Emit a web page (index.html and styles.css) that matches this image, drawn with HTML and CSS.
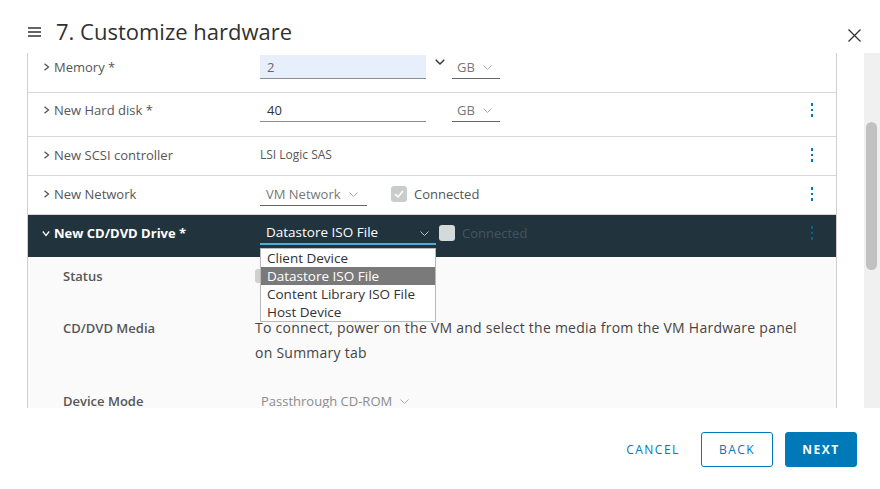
FILE: index.html
```html
<!DOCTYPE html>
<html>
<head>
<meta charset="utf-8">
<link rel="stylesheet" href="styles.css">
</head>
<body>
<div class="dialog">
  <header class="head">
    <svg class="burger" width="13" height="10" viewBox="0 0 13 10"><path d="M0 1h13M0 5h13M0 9h13" stroke="#333" stroke-width="1.3"/></svg>
    <h1 class="title">7. Customize hardware</h1>
    <svg class="close" width="13" height="13" viewBox="0 0 13 13"><path d="M0.5 0.5l12 12M12.5 0.5l-12 12" stroke="#333" stroke-width="1.3"/></svg>
  </header>

  <div class="body">
    <div class="panel">
      <div class="row row-mem">
        <div class="label"><svg class="chev" width="7" height="8" viewBox="0 0 7 8"><path d="M1.5 0.8l4 3.2-4 3.2" fill="none" stroke="#565656" stroke-width="1.3"/></svg>Memory *</div>
        <div class="value">
          <div class="input input-focus">2</div>
          <div class="spin"><svg width="10" height="6" viewBox="0 0 10 6"><path d="M0.7 0.7l4.3 4.3 4.3-4.3" fill="none" stroke="#333" stroke-width="1.4"/></svg></div>
          <div class="unit">GB <svg class="dd" width="9" height="5" viewBox="0 0 9 5"><path d="M0.5 0.5l4 4 4-4" fill="none" stroke="#aaa" stroke-width="1"/></svg></div>
        </div>
        <div class="kebab"></div>
      </div>

      <div class="row row-disk">
        <div class="label"><svg class="chev" width="7" height="8" viewBox="0 0 7 8"><path d="M1.5 0.8l4 3.2-4 3.2" fill="none" stroke="#565656" stroke-width="1.3"/></svg>New Hard disk *</div>
        <div class="value">
          <div class="input input-dark">40</div>
          <div class="spin"></div>
          <div class="unit">GB <svg class="dd" width="9" height="5" viewBox="0 0 9 5"><path d="M0.5 0.5l4 4 4-4" fill="none" stroke="#aaa" stroke-width="1"/></svg></div>
        </div>
        <div class="kebab"><span></span><span></span><span></span></div>
      </div>

      <div class="row row-std">
        <div class="label"><svg class="chev" width="7" height="8" viewBox="0 0 7 8"><path d="M1.5 0.8l4 3.2-4 3.2" fill="none" stroke="#565656" stroke-width="1.3"/></svg>New SCSI controller</div>
        <div class="value"><span class="plain">LSI Logic SAS</span></div>
        <div class="kebab"><span></span><span></span><span></span></div>
      </div>

      <div class="row row-std">
        <div class="label"><svg class="chev" width="7" height="8" viewBox="0 0 7 8"><path d="M1.5 0.8l4 3.2-4 3.2" fill="none" stroke="#565656" stroke-width="1.3"/></svg>New Network</div>
        <div class="value">
          <div class="select net">VM Network <svg class="dd" width="9" height="5" viewBox="0 0 9 5"><path d="M0.5 0.5l4 4 4-4" fill="none" stroke="#aaa" stroke-width="1"/></svg></div>
          <div class="check check-on"><svg width="10" height="8" viewBox="0 0 10 8"><path d="M1 4l3 3 5-6" fill="none" stroke="#fff" stroke-width="1.6"/></svg></div>
          <span class="check-label">Connected</span>
        </div>
        <div class="kebab"><span></span><span></span><span></span></div>
      </div>

      <div class="row row-dark">
        <div class="label label-dark"><svg class="chev" width="8" height="7" viewBox="0 0 8 7"><path d="M0.8 1.5l3.2 4 3.2-4" fill="none" stroke="#fff" stroke-width="1.3"/></svg>New CD/DVD Drive *</div>
        <div class="value">
          <div class="select select-dark">Datastore ISO File
            <svg class="dd-dark" width="9" height="5" viewBox="0 0 9 5"><path d="M0.5 0.5l4 4 4-4" fill="none" stroke="#b8c2c8" stroke-width="1"/></svg>
            <ul class="menu">
              <li>Client Device</li>
              <li class="sel">Datastore ISO File</li>
              <li>Content Library ISO File</li>
              <li>Host Device</li>
            </ul>
          </div>
          <div class="check check-dark"></div>
          <span class="check-label dim">Connected</span>
        </div>
        <div class="kebab kebab-dim"><span></span><span></span><span></span></div>
      </div>

      <div class="details">
        <div class="drow drow-status">
          <div class="dlabel">Status</div>
          <div class="dvalue"><div class="toggle"></div></div>
        </div>
        <div class="drow drow-media">
          <div class="dlabel">CD/DVD Media</div>
          <div class="dvalue text">To connect, power on the VM and select the media from the VM Hardware panel on Summary tab</div>
        </div>
        <div class="drow">
          <div class="dlabel">Device Mode</div>
          <div class="dvalue mode">Passthrough CD-ROM <svg class="dd" width="9" height="5" viewBox="0 0 9 5"><path d="M0.5 0.5l4 4 4-4" fill="none" stroke="#aaa" stroke-width="1"/></svg></div>
        </div>
      </div>
    </div>
    <div class="scroll"><div class="thumb"></div></div>
  </div>

  <footer class="foot">
    <button class="btn btn-flat">CANCEL</button>
    <button class="btn btn-outline">BACK</button>
    <button class="btn btn-primary">NEXT</button>
  </footer>
</div>
</body>
</html>
```

FILE: styles.css
```css
* { box-sizing: border-box; }
html, body { margin: 0; padding: 0; background: #fff; }
body {
  font-family: "Open Sans", "Noto Sans", sans-serif;
  color: #333;
  width: 880px;
  height: 489px;
  overflow: hidden;
}
.dialog { width: 880px; height: 489px; display: flex; flex-direction: column; }

.head {
  height: 53px;
  display: flex;
  align-items: center;
  padding: 8px 19px 0 28px;
}
.burger { flex: none; margin-top: 3px; }
.title {
  margin: 0 0 0 15px;
  font-size: 22px;
  line-height: 30px;
  font-weight: 400;
  color: #313131;
  flex: 1;
}
.close { flex: none; margin-top: 9px; }

.body {
  height: 355px;
  display: flex;
  padding-left: 27px;
}
.panel {
  width: 810px;
  height: 355px;
  border-left: 1px solid #d0d0d0;
  border-right: 1px solid #d0d0d0;
  overflow: hidden;
  position: relative;
}
.scroll {
  margin-left: 27px;
  width: 16px;
  height: 355px;
  background: #f0f0f0;
  padding-top: 69px;
}
.thumb {
  width: 11px;
  height: 148px;
  margin-left: 2px;
  background: #c1c1c1;
  border-radius: 6px;
}

.row {
  display: grid;
  grid-template-columns: 232px 1fr 44px;
  align-items: start;
  border-bottom: 1px solid #d7d7d7;
  font-size: 13px;
  line-height: 24px;
}
.row-mem { height: 40px; padding-top: 2px; }
.row-disk { height: 44px; padding-top: 5px; }
.row-std { height: 39px; padding-top: 6px; }
.row-dark { height: 42px; padding-top: 6px; background: #21333d; border-bottom: none; }

.label {
  padding-left: 15px;
  color: #565656;
  display: flex;
  align-items: center;
  height: 24px;
}
.chev { margin-right: 4px; flex: none; }
.label-dark { color: #fff; font-weight: 700; padding-left: 14px; }
.label-dark .chev { margin-right: 4px; }

.value { display: flex; align-items: center; height: 24px; }
.input {
  width: 166px;
  height: 24px;
  padding-left: 7px;
  border-bottom: 1px solid #8c8c8c;
  color: #666;
}
.input-focus { background: #e8effc; }
.input-dark { color: #333; }
.spin { width: 26px; height: 24px; display: flex; justify-content: center; padding-top: 4px; padding-left: 2px; align-items: flex-start; }
.unit {
  width: 48px;
  height: 24px;
  padding-left: 5px;
  border-bottom: 1px solid #666;
  color: #777;
  display: flex;
  align-items: center;
}
.dd { margin-left: 8px; margin-top: 1px; }
.plain { font-size: 12px; color: #565656; }

.select {
  height: 24px;
  padding-left: 6px;
  border-bottom: 1px solid #666;
  display: flex;
  align-items: center;
  color: #777;
}
.net { width: 107px; }
.check {
  width: 16px; height: 16px; border-radius: 3px;
  display: flex; align-items: center; justify-content: center;
  margin-left: 24px;
}
.check-on { background: #c9cccf; }
.check-label { margin-left: 7px; color: #565656; }
.dim { color: #435660; }

.select-dark {
  width: 176px;
  color: #fff;
  font-size: 13.5px;
  border-bottom: 2px solid #49afd9;
  position: relative;
}
.dd-dark { position: absolute; right: 7px; top: 10px; }
.check-dark { background: #d4d9dc; margin-left: 3px; }

.kebab {
  height: 24px;
  display: flex;
  flex-direction: column;
  align-items: center;
  justify-content: center;
  gap: 3px;
  padding-right: 4px;
}
.kebab span { width: 2.5px; height: 2.5px; background: #0079b8; display: block; }
.kebab-dim span { background: #0c5e85; }

.menu {
  position: absolute;
  left: 0;
  top: 27px;
  width: 176px;
  margin: 0;
  padding: 0;
  list-style: none;
  background: #fff;
  border: 1px solid #b9b9b9;
  z-index: 5;
}
.menu li {
  height: 18px;
  line-height: 18px;
  padding-left: 6px;
  color: #313131;
  font-size: 13.5px;
}
.menu li.sel { background: #7a7a7a; color: #fff; }

.details {
  background: #fafafa;
  height: 200px;
  padding-top: 7px;
  font-size: 13px;
}
.drow { display: grid; grid-template-columns: 227px 1fr; line-height: 24px; }
.drow-status { height: 24px; margin-bottom: 28px; }
.drow-media { margin-bottom: 24px; }
.dlabel { padding-left: 35px; font-weight: 600; color: #565656; }
.text { font-size: 14px; letter-spacing: 0.25px; line-height: 25px; color: #454545; padding-right: 30px; margin-top: -1px; }
.toggle { width: 30px; height: 14px; background: #d0d0d0; border-radius: 3px; margin-top: 5px; }
.mode { color: #8c8c8c; padding-left: 6px; display: flex; align-items: center; }

.foot {
  height: 81px;
  display: flex;
  justify-content: flex-end;
  align-items: center;
  gap: 12px;
  padding: 2px 23px 0 0;
}
.btn {
  width: 72px;
  height: 35px;
  font-family: "Open Sans", "Noto Sans", sans-serif;
  font-size: 12px;
  letter-spacing: 1.5px;
  font-weight: 500;
  border-radius: 3px;
  padding: 0;
  text-align: center;
}
.btn-flat { background: none; border: none; color: #0079b8; }
.btn-outline { background: #fff; border: 1px solid #0079b8; color: #0079b8; }
.btn-primary { background: #0079b8; border: 1px solid #0079b8; color: #fff; font-weight: 700; }
```
